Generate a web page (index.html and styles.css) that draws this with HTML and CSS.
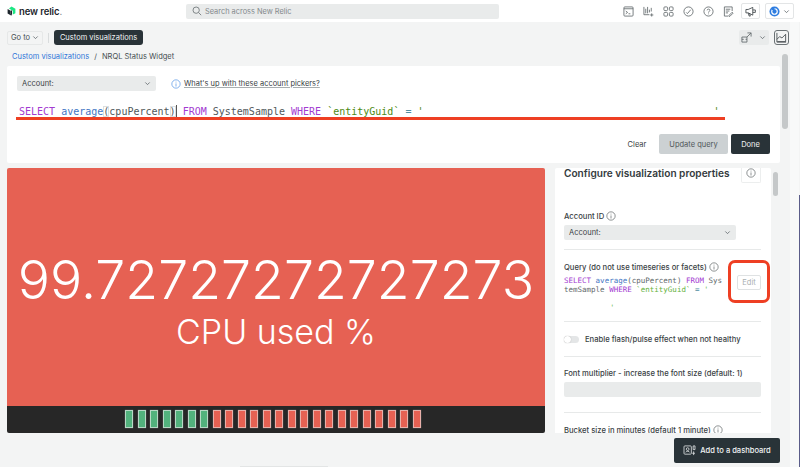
FILE: index.html
```html
<!DOCTYPE html>
<html lang="en">
<head>
<meta charset="utf-8">
<title>NRQL Status Widget</title>
<link rel="stylesheet" href="styles.css">
</head>
<body>
<header class="topbar">
  <div class="brand">
    <svg class="logo" viewBox="0 0 16 18" width="9" height="10"><path d="M8 1 15 5V13L10.500 15.500V8.500L8 7 3.500 4.500Z" fill="#1ce783"/><path d="M1 5.500 6.500 8.700V15L8 15.900V17.500L1 13.300Z" fill="#1d252c"/><path d="M6.500 8.700 9 7.500V15.500L8 16 6.500 15Z" fill="#1d252c"/></svg>
    <span class="brand-name">new relic</span><span class="brand-dot">.</span>
  </div>
  <div class="search">
    <svg viewBox="0 0 12 12" width="10" height="10"><circle cx="5" cy="5" r="3.800" fill="none" stroke="#6b7275" stroke-width="1"/><path d="M8 8 11 11" stroke="#6b7275" stroke-width="1"/></svg>
    <span>Search across New Relic</span>
  </div>
  <nav class="top-icons">
    <svg class="ti" viewBox="0 0 12 12"><rect x="1" y="1" width="10" height="10" rx="1"/><path d="M1 3H11M3 5.500 5 7 3 8.500M6 8.500H8"/></svg>
    <svg class="ti" viewBox="0 0 12 12"><path d="M1 1V9.500H7M3 3V8M5 1V8M7 4V7M9 2V6M9.500 8V11.500M7.800 9.800H11.300"/></svg>
    <svg class="ti" viewBox="0 0 12 12"><rect x="1" y="1" width="4" height="4" rx="1"/><rect x="7" y="1" width="4" height="4" rx="1"/><rect x="1" y="7" width="4" height="4" rx="1"/><rect x="7" y="7" width="4" height="4" rx="1"/></svg>
    <svg class="ti" viewBox="0 0 12 12"><circle cx="6" cy="6" r="5"/><path d="M3.500 7 4.800 8.300 8.500 4"/></svg>
    <svg class="ti" viewBox="0 0 12 12"><circle cx="6" cy="6" r="5"/><path d="M4.500 4.700C4.500 2.900 7.600 3 7.500 4.800 7.400 5.900 6 5.900 6 7.200M6 8.300V9"/></svg>
    <svg class="ti" viewBox="0 0 12 12"><path d="M10 5.500V1H1.500V11H5.500M3 3.500H8M3 5.500H7M3 7.500H5.500M6.500 10.300 10 6.800 11 7.800 7.500 11.300H6.500Z"/></svg>
    <button class="icon-box"><svg class="ti dark" viewBox="0 0 12 12"><path d="M1 3.800V7.500H3.500L8.500 10V1.500L3.500 3.800ZM3.500 7.500 4.500 11H5.800L5 7.800M8.500 4.300H11.300V7H8.500"/></svg></button>
    <button class="icon-box user">
      <svg viewBox="0 0 12 12" width="11" height="11"><circle cx="6" cy="6" r="5.500" fill="#2e7de0"/><circle cx="6" cy="6" r="3" fill="none" stroke="#fff" stroke-width="1.300"/><rect x="3" y="1.500" width="3" height="3" fill="#2e7de0"/></svg>
      <svg class="chev" viewBox="0 0 8 8"><path d="M1.500 2.800 4 5.300 6.500 2.800"/></svg>
    </button>
  </nav>
</header>

<div class="page">
  <div class="toolbar">
    <div class="tool-left">
      <button class="goto">Go to <svg class="chev" viewBox="0 0 8 8"><path d="M1.500 2.800 4 5.300 6.500 2.800"/></svg></button>
      <span class="vsep"></span>
      <span class="tag">Custom visualizations</span>
    </div>
    <div class="tool-right">
      <div class="share">
        <svg class="ti" viewBox="0 0 12 12"><path d="M1 5.500H6.500V11H1ZM1 8H3M5 8H6.500M7 1H11V5M11 1 6.500 5.500"/></svg>
        <svg class="chev" viewBox="0 0 8 8"><path d="M1.500 2.800 4 5.300 6.500 2.800"/></svg>
      </div>
      <button class="chart-btn"><svg class="ti dark" viewBox="0 0 12 12"><path d="M1 1V11H11M1 8 4 5 6.500 6.500 10.500 2.500V10.500H1.500"/></svg></button>
    </div>
  </div>

  <div class="crumbs"><a class="crumb-link">Custom visualizations</a><span class="slash">/</span><span>NRQL Status Widget</span></div>

  <section class="query-card">
    <div class="picker-row">
      <div class="select wide"><span>Account:</span><svg class="chev" viewBox="0 0 8 8"><path d="M1.500 2.800 4 5.300 6.500 2.800"/></svg></div>
      <svg class="info blue" viewBox="0 0 12 12"><circle cx="6" cy="6" r="5"/><path d="M6 5.300V9M6 3.200V4.200"/></svg>
      <a class="help">What's up with these account pickers?</a>
    </div>
    <div class="code-line"><span class="kw">SELECT</span> <span class="fn">average</span><span class="brk">(</span>cpuPercent<span class="brk">)</span><span class="cursor"></span> <span class="kw">FROM</span> SystemSample <span class="kw">WHERE</span> <span class="str">`entityGuid`</span> <span class="op">=</span> <span class="str">'</span><span class="gap"></span><span class="str">'</span></div>
    <div class="query-actions">
      <button class="btn-plain">Clear</button>
      <button class="btn-gray">Update query</button>
      <button class="btn-dark">Done</button>
    </div>
    <span class="mark-line"></span>
  </section>

  <main class="content">
    <section class="widget">
      <div class="status">
        <div class="value">99.72727272727273</div>
        <div class="label">CPU used %</div>
      </div>
      <div class="history">
        <i class="ok"></i><i class="ok"></i><i class="ok"></i><i class="ok"></i><i class="ok"></i><i class="ok"></i><i class="ok"></i>
        <i></i><i></i><i></i><i></i><i></i><i></i><i></i><i></i><i></i><i></i><i></i><i></i><i></i><i></i><i></i><i></i><i></i>
      </div>
    </section>

    <aside class="config">
      <div class="config-head">
        <h2>Configure visualization properties</h2>
        <button class="info-btn"><svg class="info" viewBox="0 0 12 12"><circle cx="6" cy="6" r="5"/><path d="M6 5.300V9M6 3.200V4.200"/></svg></button>
      </div>
      <div class="field first">
        <label>Account ID <svg class="info" viewBox="0 0 12 12"><circle cx="6" cy="6" r="5"/><path d="M6 5.300V9M6 3.200V4.200"/></svg></label>
        <div class="select full"><span>Account:</span><svg class="chev" viewBox="0 0 8 8"><path d="M1.500 2.800 4 5.300 6.500 2.800"/></svg></div>
      </div>
      <div class="field query-field">
        <div class="query-main">
          <label>Query (do not use timeseries or facets) <svg class="info" viewBox="0 0 12 12"><circle cx="6" cy="6" r="5"/><path d="M6 5.300V9M6 3.200V4.200"/></svg></label>
          <div class="code-small"><span class="kw">SELECT</span> <span class="fn">average</span>(cpuPercent) <span class="kw">FROM</span> Sys<br>temSample <span class="kw">WHERE</span> <span class="str2">`entityGuid`</span> <span class="op">=</span> <span class="str2">'</span><br><br><span class="indent"></span><span class="str2">'</span></div>
        </div>
        <button class="btn-edit">Edit</button>
      </div>
      <div class="field toggle-field">
        <span class="toggle"></span><span>Enable flash/pulse effect when not healthy</span>
      </div>
      <div class="field font-field">
        <label>Font multiplier - increase the font size (default: 1)</label>
        <div class="input"></div>
      </div>
      <div class="field last">
        <label>Bucket size in minutes (default 1 minute) <svg class="info" viewBox="0 0 12 12"><circle cx="6" cy="6" r="5"/><path d="M6 5.300V9M6 3.200V4.200"/></svg></label>
      </div>
      <span class="mark-box"></span>
    </aside>
    <div class="scrollbar"><span></span></div>
  </main>
</div>
<span class="side-strip"></span>
<span class="side-edge"></span>
<span class="page-scroll"></span>
<span class="bottom-scroll"></span>

<button class="add-dash">
  <svg class="ti light" viewBox="0 0 14 12"><rect x="1" y="1" width="8" height="9" rx="1"/><circle cx="5" cy="4.500" r="1.500"/><path d="M3 8C3 6.500 7 6.500 7 8M11 1H13V5H11ZM11.500 7V11M10 9H13"/></svg>
  Add to a dashboard
</button>
```
FILE: styles.css
```css
* { box-sizing: border-box; }
html, body { margin: 0; height: 100%; }
body {
  width: 800px; height: 467px; overflow: hidden;
  background: #f3f4f4; color: #2a3133;
  font-family: Inter, "Liberation Sans", sans-serif; font-size: 8px;
  display: flex; flex-direction: column; position: relative;
}
button { font-family: inherit; cursor: pointer; padding: 0; }
svg { flex: none; }
.ti { width: 11px; height: 11px; fill: none; stroke: #5f6669; stroke-width: .9; }
.ti.dark { stroke: #3a4245; }
.ti.light { stroke: #dfe3e4; width: 13px; height: 11px; }
.chev { width: 7px; height: 7px; fill: none; stroke: #5c6467; stroke-width: .9; }
.info { width: 10px; height: 10px; fill: none; stroke: #3f4649; stroke-width: .7; vertical-align: -2px; }
.info.blue { stroke: #2e7de0; }

.topbar { height: 22px; background: #fff; display: flex; align-items: center; flex: none; position: relative; }
.brand { display: flex; align-items: center; margin-left: 7px; width: 179px; }
.brand-name { font-size: 9.500px; font-weight: 600; color: #1d252c; margin-left: 3px; letter-spacing: -.1px; }
.brand-dot { font-size: 9.500px; color: #8a9194; }
.search { width: 313px; height: 15px; background: #e9ebeb; border-radius: 2px; display: flex; align-items: center; gap: 3px; padding-left: 6px; color: #83898c; font-size: 7.400px; }
.top-icons { margin-left: auto; margin-right: 6px; display: flex; align-items: center; gap: 9px; }
.icon-box { height: 16px; width: 19px; background: #fff; border: 1px solid #e3e5e6; border-radius: 2px; display: flex; align-items: center; justify-content: center; margin-left: -2px; }
.icon-box.user { width: 29px; gap: 3px; margin-left: -4px; }

.page { flex: 1; display: flex; flex-direction: column; padding: 7px 20px 0 7px; min-height: 0; }
.toolbar { display: flex; justify-content: space-between; align-items: center; height: 17px; margin-right: 1px; }
.tool-left { display: flex; align-items: center; }
.goto { height: 14px; width: 36px; background: transparent; border: 1px solid #e6e8e8; border-radius: 2px; font-size: 7.500px; color: #464e51; display: flex; align-items: center; justify-content: center; gap: 2px; }
.vsep { width: 1px; height: 10px; background: #d9dcdd; margin: 0 5px; }
.tag { height: 15px; width: 89px; background: #293338; color: #f2f4f4; border-radius: 3px; font-size: 7.500px; display: flex; align-items: center; justify-content: center; }
.tool-right { display: flex; align-items: center; gap: 5px; margin-right: -10px; }
.share { width: 30px; height: 15px; background: #e9ebeb; border-radius: 2px; display: flex; align-items: center; gap: 7px; padding-left: 2px; }
.chart-btn { width: 15px; height: 15px; background: #f3f4f4; border: 1px solid #6b7275; border-radius: 3px; display: flex; align-items: center; justify-content: center; }

.crumbs { height: 20px; display: flex; align-items: center; gap: 5px; padding: 1px 0 0 5px; font-size: 7.500px; color: #464e51; }
.crumb-link { color: #2f76d8; }

.query-card { height: 97px; width: 773px; margin-bottom: 5px; background: #fff; border-radius: 2px; position: relative; flex: none; display: flex; flex-direction: column; padding: 10px 10px 0 10px; }
.picker-row { display: flex; align-items: center; height: 15px; }
.select { background: #e9ebeb; border-radius: 2px; height: 15px; display: flex; align-items: center; justify-content: space-between; padding: 0 5px; font-size: 7.500px; color: #3a4245; }
.select.wide { width: 139px; margin-right: 15px; }
.select.full { width: 172px; }
.help { margin-left: 3px; font-size: 7.450px; color: #3a4245; text-decoration: underline; text-decoration-color: #a8aeb0; }
.code-line { font-family: "DejaVu Sans Mono", monospace; font-size: 10px; margin: 14px 0 0 2px; color: #50585b; white-space: pre; height: 13px; line-height: 13px; }
.kw { color: #a33bd1; }
.fn { color: #3f76c4; }
.str { color: #4d8a12; }
.str2 { color: #64b23c; }
.op { color: #4f8ea3; }
.brk { outline: 1px solid #dcdfe0; outline-offset: -1px; }
.cursor { display: inline-block; width: 0; height: 12px; border-left: 1px solid #555; vertical-align: -2px; }
.gap { display: inline-block; width: 290px; }
.query-actions { margin-top: auto; margin-bottom: 9px; display: flex; align-items: center; justify-content: flex-end; gap: 3px; }
.query-actions button { height: 20px; border: 0; border-radius: 2px; font-size: 7.500px; }
.btn-plain { background: transparent; width: 32px; color: #3a4245; margin-right: 3px; }
.btn-gray { background: #ccd1d3; color: #4f575a; width: 69px; }
.btn-dark { background: #293338; color: #f2f4f4; width: 39px; }
.mark-line { position: absolute; left: 9px; top: 51px; width: 709px; height: 3px; background: #ee3f23; }

.content { display: flex; align-items: stretch; height: 265px; flex: none; position: relative; width: 773px; }
.widget { width: 538px; display: flex; flex-direction: column; border-radius: 2px; overflow: hidden; }
.status { flex: 1; background: #e66153; color: #fff; display: flex; flex-direction: column; align-items: center; justify-content: center; font-weight: 300; padding-top: 29px; }
.value { font-size: 53.600px; line-height: 56px; }
.label { font-size: 34px; line-height: 40px; margin-top: 4px; }
.history { height: 27px; background: #272727; display: flex; gap: 4.500px; justify-content: center; align-items: center; padding: 0 6px 1px 0; }
.history i { width: 8px; height: 18px; background: #e66153; border: 1px solid #e8b0aa; box-shadow: 0 0 1px #888; }
.history i.ok { background: #52b27d; border-color: #b6d8c5; }

.config { width: 216px; margin-left: 10px; background: #fff; padding: 0 10px 0 9px; position: relative; overflow: hidden; border-radius: 2px 2px 0 0; }
.config-head { display: flex; justify-content: space-between; height: 26px; align-items: flex-start; }
.config-head h2 { margin: 0; font-size: 10.100px; font-weight: 600; line-height: 11px; color: #333a3d; }
.info-btn { width: 20px; height: 15px; background: #fff; border: 1px solid #eceeee; border-top: 0; border-radius: 0 0 2px 2px; display: flex; justify-content: center; padding-top: 0; }
.field { border-bottom: 1px solid #e7e9e9; font-size: 7.650px; color: #3a4245; }
.field label { display: block; font-weight: 500; line-height: 10px; }
.field.first { padding: 17px 0 0; height: 56px; }
.field.first label { margin-bottom: 3px; }
.query-field { display: flex; justify-content: space-between; height: 72px; padding-top: 12px; }
.code-small { font-family: "DejaVu Sans Mono", monospace; font-size: 7.500px; line-height: 9px; color: #5e6669; margin-top: 2.500px; white-space: pre; }
.indent { display: inline-block; width: 46px; }
.btn-edit { width: 24px; height: 15px; background: #fff; border: 1px solid #dfe2e3; border-radius: 2px; color: #a8aeb0; font-size: 7.500px; margin-top: 13px; }
.toggle-field { display: flex; align-items: center; gap: 6px; height: 35px; font-weight: 500; }
.toggle { width: 15px; height: 7px; background: #e4e6e7; border-radius: 4px; position: relative; display: inline-block; }
.toggle::before { content: ""; position: absolute; left: 0; top: 0; width: 7px; height: 7px; background: #fff; border-radius: 50%; box-shadow: 0 0 1px #999; }
.font-field { height: 56px; padding-top: 12px; }
.input { height: 15px; background: #e9ebeb; border-radius: 2px; margin-top: 3px; }
.field.last { border: 0; padding-top: 12px; }
.mark-box { position: absolute; left: 173px; top: 92px; width: 42px; height: 43px; border: 3px solid #ee3f23; border-radius: 7px; }
.scrollbar { width: 9px; position: absolute; left: 766px; top: 0; bottom: 0; }
.scrollbar span { display: block; width: 5px; height: 24px; margin-top: 4px; background: #c5c8c9; border-radius: 3px; }
.side-strip { position: absolute; left: 790px; top: 22px; width: 9px; height: 445px; background: #f8f9f9; }
.side-edge { position: absolute; left: 799px; top: 195px; width: 1px; height: 272px; background: #5b5d8a; }
.page-scroll { position: absolute; left: 782px; top: 54px; width: 6px; height: 75px; background: #c5c8c9; border-radius: 3px; }
.bottom-scroll { position: absolute; left: 240px; top: 466px; width: 88px; height: 1px; background: #e3e5e5; }
.add-dash { position: absolute; left: 674px; top: 438px; width: 106px; height: 25px; background: #293338; color: #f2f4f4; border: 0; border-radius: 2px; font-size: 7.550px; font-weight: 500; display: flex; align-items: center; justify-content: center; gap: 4px; }
```
